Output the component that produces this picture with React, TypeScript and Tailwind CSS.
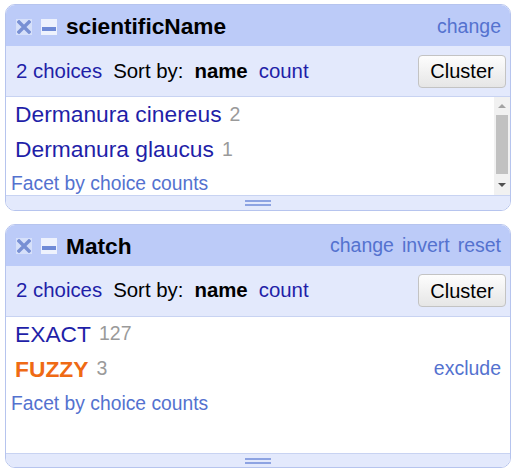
import type { ReactNode } from "react";

// Facet panels, OpenRefine style

type Choice = { label: string; count: number; selected?: boolean };

function CloseIcon() {
  return (
    <span className="flex h-[16px] w-[16px] items-center justify-center bg-[#d6e0fa]">
      <svg width="14" height="14" viewBox="0 0 14 14">
        <path d="M2 2 L12 12 M12 2 L2 12" stroke="#7890d4" strokeWidth="3.4" strokeLinecap="square" />
      </svg>
    </span>
  );
}

function MinimizeIcon() {
  return (
    <span className="flex h-[16px] w-[16px] items-end justify-center bg-[#eef2fd] pb-[4px]">
      <span className="block h-[4px] w-[14px] bg-[#6f8ad6]" />
    </span>
  );
}

function Scrollbar() {
  return (
    <div className="flex w-[16px] shrink-0 flex-col items-center bg-[#f1f1f1] py-[3px]">
      <svg width="10" height="8" viewBox="0 0 10 8" className="mt-[2px]">
        <path d="M1 6 L5 2 L9 6 Z" fill="#a3a3a3" />
      </svg>
      <div className="mt-[5px] h-[59px] w-[12px] bg-[#c1c1c1]" />
      <div className="flex-1" />
      <svg width="10" height="8" viewBox="0 0 10 8" className="mb-[3px]">
        <path d="M1 2 L9 2 L5 6 Z" fill="#505050" />
      </svg>
    </div>
  );
}

function FacetPanel({
  title,
  links,
  choices,
  bodyHeight,
  scroll,
}: {
  title: string;
  links: string[];
  choices: Choice[];
  bodyHeight: string;
  scroll?: boolean;
}) {
  return (
    <div className="overflow-hidden rounded-[10px] border border-[#b6c4ee] bg-white">
      {/* header */}
      <div className="flex h-[41px] items-center bg-[#bccbf8] pl-[10px] pr-[9px] pt-[2px]">
        <div className="flex items-center gap-[9px]">
          <CloseIcon />
          <MinimizeIcon />
        </div>
        <span className="ml-[9px] text-[22.7px] font-bold text-black">{title}</span>
        <div className="ml-auto flex gap-[8px] text-[19.5px] text-[#5472cf]">
          {links.map((l) => (
            <span key={l}>{l}</span>
          ))}
        </div>
      </div>

      {/* controls */}
      <div className="flex h-[51px] items-center gap-[11px] border-b border-[#c8d3f2] bg-[#e3e9fc] pl-[10px] pr-[4px] text-[20.4px]">
        <span className="text-[#1f1fa8]">2 choices</span>
        <span className="text-black">Sort by:</span>
        <span className="font-bold text-black">name</span>
        <span className="text-[#1f1fa8]">count</span>
        <button
          type="button"
          className="ml-auto h-[33px] w-[88px] rounded-[4px] border border-[#c3c3c3] bg-gradient-to-b from-[#fdfdfd] to-[#e6e6e6] text-[20px] leading-none text-black"
        >
          Cluster
        </button>
      </div>

      {/* body */}
      <div className={`flex ${bodyHeight}`}>
        <div className="min-w-0 flex-1">
          {choices.map((c) => (
            <ChoiceRow key={c.label} choice={c} />
          ))}
          <div className="flex h-[35px] items-center pl-[5px] text-[19.3px] text-[#5472cf]">
            Facet by choice counts
          </div>
        </div>
        {scroll && <Scrollbar />}
      </div>

      {/* resize footer */}
      <div className="flex h-[15px] items-center justify-center border-t border-[#c8d3f2] bg-[#e3e9fc]">
        <div className="flex w-[26px] flex-col gap-[2px]">
          <span className="block h-[2px] bg-[#8da3e2]" />
          <span className="block h-[2px] bg-[#8da3e2]" />
        </div>
      </div>
    </div>
  );
}

function ChoiceRow({ choice }: { choice: Choice }): ReactNode {
  return (
    <div className="flex h-[35px] items-center pl-[9px] pr-[9px]">
      <span
        className={`text-[22.8px] ${
          choice.selected ? "font-bold text-[#ef6a14]" : "text-[#1f1fa8]"
        }`}
      >
        {choice.label}
      </span>
      <span className="ml-[8px] text-[19.5px] text-[#9a9a9a]">{choice.count}</span>
      {choice.selected && (
        <span className="ml-auto text-[19.5px] text-[#5472cf]">exclude</span>
      )}
    </div>
  );
}

export default function App() {
  return (
    <div className="flex h-[468px] w-[515px] flex-col gap-[13px] bg-white pl-[5px] pr-[4px] pt-[4px] font-['Liberation_Sans',Arial,sans-serif]">
      <FacetPanel
        title="scientificName"
        links={["change"]}
        bodyHeight="h-[98px]"
        scroll
        choices={[
          { label: "Dermanura cinereus", count: 2 },
          { label: "Dermanura glaucus", count: 1 },
        ]}
      />
      <FacetPanel
        title="Match"
        links={["change", "invert", "reset"]}
        bodyHeight="h-[136px]"
        choices={[
          { label: "EXACT", count: 127 },
          { label: "FUZZY", count: 3, selected: true },
        ]}
      />
    </div>
  );
}
